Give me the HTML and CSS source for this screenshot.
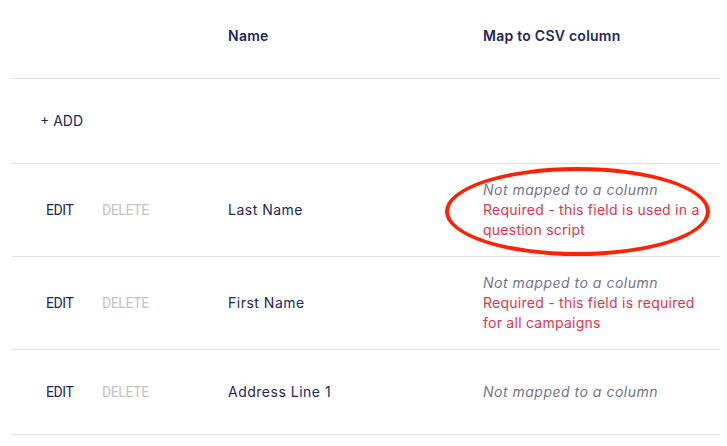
FILE: index.html
```html
<!DOCTYPE html>
<html lang="en">
<head>
<meta charset="utf-8">
<title>Fields</title>
<link rel="stylesheet" href="styles.css">
</head>
<body>
<div class="table">
  <div class="row head">
    <div class="cell actions"></div>
    <div class="cell">Name</div>
    <div class="cell">Map to CSV column</div>
  </div>
  <div class="row add-row">
    <div class="cell add">+ ADD</div>
  </div>
  <div class="row">
    <div class="cell actions"><span class="btn edit">EDIT</span><span class="btn delete">DELETE</span></div>
    <div class="cell name">Last Name</div>
    <div class="cell map">
      <span class="unmapped">Not mapped to a column</span>
      <span class="req">Required - this field is used in a question script</span>
      <span class="ring"></span>
    </div>
  </div>
  <div class="row">
    <div class="cell actions"><span class="btn edit">EDIT</span><span class="btn delete">DELETE</span></div>
    <div class="cell name">First Name</div>
    <div class="cell map">
      <span class="unmapped">Not mapped to a column</span>
      <span class="req">Required - this field is required for all campaigns</span>
    </div>
  </div>
  <div class="row">
    <div class="cell actions"><span class="btn edit">EDIT</span><span class="btn delete">DELETE</span></div>
    <div class="cell name">Address Line 1</div>
    <div class="cell map">
      <span class="unmapped">Not mapped to a column</span>
    </div>
  </div>
</div>
</body>
</html>
```

FILE: styles.css
```css
html, body {
  margin: 0;
  padding: 0;
  background: #ffffff;
}
body {
  font-family: "Inter", "Noto Sans", sans-serif;
  font-size: 14px;
  line-height: 20px;
  letter-spacing: 0.5px;
  color: #23265a;
  padding: 0 7px 0 12px;
}
.table {
  display: flex;
  flex-direction: column;
}
.row {
  display: grid;
  grid-template-columns: 216px 255px 1fr;
  align-items: center;
  min-height: 84px;
  border-bottom: 1px solid #e2e2e2;
}
.row.head {
  min-height: 0;
  height: 79px;
  align-items: start;
  padding-top: 26px;
  box-sizing: border-box;
  font-weight: 600;
  letter-spacing: 0.25px;
}
.cell {
  padding: 16px 0;
}
.head .cell {
  padding: 0;
}
.add {
  padding-left: 28px;
  grid-column: 1 / 3;
  letter-spacing: 0;
}
.actions {
  display: grid;
  grid-template-columns: 56px auto;
  padding-left: 34px;
}
.btn {
  font-family: "Roboto", "Inter", sans-serif;
  letter-spacing: -0.4px;
}
.delete {
  color: #c3c3c3;
}
.map {
  position: relative;
  display: flex;
  flex-direction: column;
  padding-right: 10px;
}
.unmapped {
  font-style: italic;
  color: #73738a;
}
.req {
  color: #e2344c;
  letter-spacing: 0.25px;
}
.ring {
  position: absolute;
  left: -38px;
  top: 3px;
  width: 265px;
  height: 89px;
  border: 4px solid #fb2306;
  border-radius: 50%;
  box-sizing: border-box;
  pointer-events: none;
}
```
